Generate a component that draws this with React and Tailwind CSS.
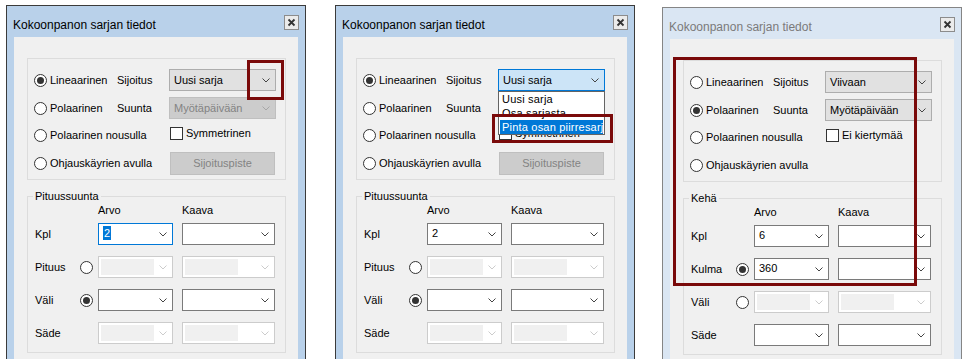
import React from "react";

function Chevron({ color = "#444" }) {
  return (
    <svg width="8" height="5" viewBox="0 0 8 5" className="shrink-0">
      <path d="M0.5 0.5 L4 4 L7.5 0.5" fill="none" stroke={color} strokeWidth="1" />
    </svg>
  );
}

function Radio({ checked }) {
  return (
    <div className="w-[13px] h-[13px] shrink-0 rounded-full border border-[#333] bg-white flex items-center justify-center">
      {checked && <div className="w-[7px] h-[7px] rounded-full bg-[#333]" />}
    </div>
  );
}

function Checkbox() {
  return <div className="w-[13px] h-[13px] shrink-0 border border-[#333] bg-white" />;
}

// dropdown-list style combo (Sijoitus / Suunta)
function ListCombo({ text, variant = "normal" }) {
  const styles = {
    normal: "bg-[#e1e1e1] border-[#adadad] text-black",
    disabled: "bg-[#cccccc] border-[#bfbfbf] text-[#838383]",
    focused: "bg-[#cce4f7] border-[#0078d7] text-black",
  };
  return (
    <div className={`w-[107px] h-[22px] border flex items-center justify-between pl-[4px] pr-[5px] ${styles[variant]}`}>
      <span className="whitespace-nowrap">{text}</span>
      <Chevron color={variant === "disabled" ? "#a6a6a6" : "#444"} />
    </div>
  );
}

// editable combo (Arvo / Kaava)
function EditCombo({ width, value, variant = "normal" }) {
  if (variant === "disabled") {
    return (
      <div className={`${width} h-[22px] border border-[#cccccc] bg-white flex items-center justify-between p-[2px] pr-[5px]`}>
        <div className="w-[53px] h-full bg-[#f0f0f0]" />
        <Chevron color="#cccccc" />
      </div>
    );
  }
  const border = variant === "focused" ? "border-[#0078d7]" : "border-[#7a7a7a]";
  return (
    <div className={`${width} h-[22px] border ${border} bg-white flex items-center justify-between pl-[4px] pr-[5px]`}>
      <span className="pb-[2px]">
        {variant === "focused" ? (
          <span className="bg-[#0078d7] text-white px-[1px] leading-[14px] inline-block">{value}</span>
        ) : (
          value
        )}
      </span>
      <Chevron />
    </div>
  );
}

function RedBox({ className }) {
  return <div className={`absolute border-[3px] border-[#7a0a0a] pointer-events-none ${className}`} />;
}

function Dialog({ inactive, selected, sijoitus, suunta, checkLabel, showButton, groupLabel, rows, top, overlay }) {
  return (
    <div
      className={`relative w-[300px] h-[380px] shrink-0 border ${
        inactive ? "border-[#858585] bg-[#dae6f3]" : "border-[#3b3b3b] bg-[#b9d1ea]"
      } ${top}`}
    >
      <div className="h-[31px] flex items-start justify-between pl-[6px] pr-[6px]">
        <div className={`mt-[12px] text-[12px] leading-[14px] ${inactive ? "text-[#7a7a7a]" : "text-black"}`}>
          Kokoonpanon sarjan tiedot
        </div>
        <div className="mt-[9px] w-[15px] h-[15px] border border-[#8c8c8c] bg-[#ebebeb] flex items-center justify-center">
          <svg width="9" height="9" viewBox="0 0 9 9">
            <path d="M1.5 1.5 L7.5 7.5 M7.5 1.5 L1.5 7.5" stroke="#333" strokeWidth="1.8" />
          </svg>
        </div>
      </div>

      <div className="mx-[7px] h-[400px] bg-[#f0f0f0] pt-[21px]">
        {/* top group */}
        <div className="ml-[13px] w-[259px] border border-[#dcdcdc] pt-[10px] pl-[6px] pb-[4px]">
          <div className="flex items-center h-[22px]">
            <div className="w-[83px] flex items-center gap-[3px]">
              <Radio checked={selected === 0} />
              <span>Lineaarinen</span>
            </div>
            <div className="w-[52px]">Sijoitus</div>
            <ListCombo {...sijoitus} />
          </div>
          <div className="flex items-center h-[22px] mt-[6px]">
            <div className="w-[83px] flex items-center gap-[3px]">
              <Radio checked={selected === 1} />
              <span>Polaarinen</span>
            </div>
            <div className="w-[52px]">Suunta</div>
            <ListCombo {...suunta} />
          </div>
          <div className="flex items-center h-[28px] mt-[2px]">
            <div className="w-[136px] flex items-center gap-[3px]">
              <Radio />
              <span>Polaarinen nousulla</span>
            </div>
            <div className="flex items-center gap-[3px] -mt-[3px]">
              <Checkbox />
              <span>{checkLabel}</span>
            </div>
          </div>
          <div className="flex items-center h-[23px] mt-[3px]">
            <div className="w-[136px] flex items-center gap-[3px]">
              <Radio />
              <span className="whitespace-nowrap">Ohjauskäyrien avulla</span>
            </div>
            {showButton && (
              <div className="w-[105px] h-[23px] border border-[#bfbfbf] bg-[#cccccc] text-[#838383] flex items-center justify-center">
                Sijoituspiste
              </div>
            )}
          </div>
        </div>

        {/* bottom group */}
        <div className="relative mt-[16px] ml-[13px] w-[259px] border border-[#dcdcdc] pt-[6px] pl-[7px] pb-[8px]">
          <span className="absolute -top-[8px] left-[5px] px-[2px] bg-[#f0f0f0] leading-[14px]">{groupLabel}</span>
          <div className="flex h-[14px] items-center pl-[63px]">
            <div className="w-[84px]">Arvo</div>
            <div>Kaava</div>
          </div>
          {rows.map((r, i) => (
            <div key={r.label} className={`flex items-center h-[22px] ${i === 0 ? "mt-[6px]" : "mt-[11px]"}`}>
              <div className="w-[45px]">{r.label}</div>
              <div className="w-[18px]">{r.radio !== undefined && <Radio checked={r.radio} />}</div>
              <EditCombo width="w-[75px]" value={r.value} variant={r.a} />
              <div className="ml-[9px]">
                <EditCombo width="w-[93px]" variant={r.b} />
              </div>
            </div>
          ))}
        </div>
      </div>
      {overlay}
    </div>
  );
}

export default function App() {
  const rows12 = (focused) => [
    { label: "Kpl", value: "2", a: focused ? "focused" : "normal", b: "normal" },
    { label: "Pituus", radio: false, a: "disabled", b: "disabled" },
    { label: "Väli", radio: true, a: "normal", b: "normal" },
    { label: "Säde", a: "disabled", b: "disabled" },
  ];

  return (
    <div className="w-[970px] h-[359px] overflow-hidden bg-white flex items-start text-[11px] leading-[13px] text-black font-['Liberation_Sans',Arial,sans-serif]">
      <div className="ml-[6px]">
        <Dialog
          top="mt-[5px]"
          selected={0}
          sijoitus={{ text: "Uusi sarja", variant: "normal" }}
          suunta={{ text: "Myötäpäivään", variant: "disabled" }}
          checkLabel="Symmetrinen"
          showButton
          groupLabel="Pituussuunta"
          rows={rows12(true)}
          overlay={<RedBox className="left-[240px] top-[54px] w-[37px] h-[40px]" />}
        />
      </div>
      <div className="ml-[29px]">
        <Dialog
          top="mt-[5px]"
          selected={0}
          sijoitus={{ text: "Uusi sarja", variant: "focused" }}
          suunta={{ text: "Myötäpäivään", variant: "disabled" }}
          checkLabel="Symmetrinen"
          showButton
          groupLabel="Pituussuunta"
          rows={rows12(false)}
          overlay={
            <>
              <div className="absolute left-[162px] top-[85px] w-[107px] border border-[#646464] bg-white overflow-hidden text-[11px] tracking-[0.2px]">
                <div className="h-[14px] pl-[3px] leading-[14px] whitespace-nowrap">Uusi sarja</div>
                <div className="h-[14px] pl-[3px] leading-[14px] whitespace-nowrap">Osa sarjasta</div>
                <div className="h-[14px] mx-[1px] pl-[2px] leading-[14px] whitespace-nowrap bg-[#0078d7] text-white">
                  Pinta osan piirresarjas
                </div>
              </div>
              <RedBox className="left-[156px] top-[108px] w-[121px] h-[29px]" />
            </>
          }
        />
      </div>
      <div className="ml-[27px]">
        <Dialog
          inactive
          top="mt-[7px]"
          selected={1}
          sijoitus={{ text: "Viivaan", variant: "normal" }}
          suunta={{ text: "Myötäpäivään", variant: "normal" }}
          checkLabel="Ei kiertymää"
          groupLabel="Kehä"
          rows={[
            { label: "Kpl", value: "6", a: "normal", b: "normal" },
            { label: "Kulma", radio: true, value: "360", a: "normal", b: "normal" },
            { label: "Väli", radio: false, a: "disabled", b: "disabled" },
            { label: "Säde", a: "normal", b: "normal" },
          ]}
          overlay={<RedBox className="left-[10px] top-[49px] w-[244px] h-[229px]" />}
        />
      </div>
    </div>
  );
}
